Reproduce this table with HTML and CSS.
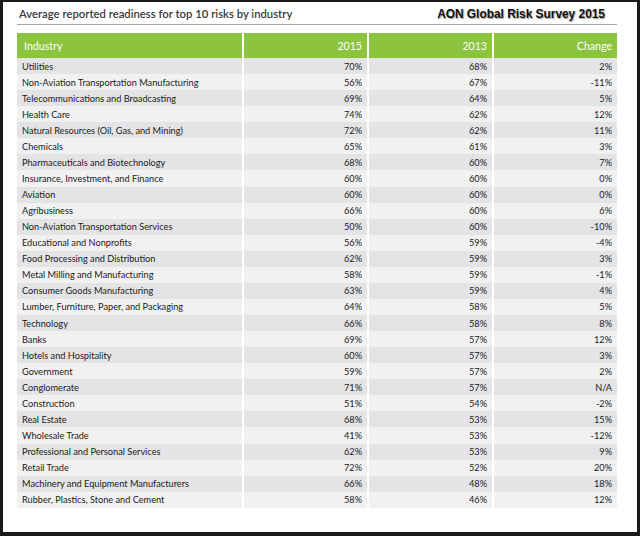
FILE: index.html
```html
<!DOCTYPE html>
<html>
<head>
<meta charset="utf-8">
<link rel="stylesheet" href="styles.css">
</head>
<body>
<div class="frame">
  <div class="titlebar">
    <div class="title">Average reported readiness for top 10 risks by industry</div>
    <div class="brand">AON Global Risk Survey 2015</div>
  </div>
  <table class="grid">
    <colgroup>
      <col class="c-ind"><col class="c-num"><col class="c-num"><col class="c-num">
    </colgroup>
    <thead>
      <tr><th class="ind">Industry</th><th>2015</th><th>2013</th><th>Change</th></tr>
    </thead>
    <tbody>
      <tr><td class="ind">Utilities</td><td>70%</td><td>68%</td><td>2%</td></tr>
      <tr><td class="ind">Non-Aviation Transportation Manufacturing</td><td>56%</td><td>67%</td><td>-11%</td></tr>
      <tr><td class="ind">Telecommunications and Broadcasting</td><td>69%</td><td>64%</td><td>5%</td></tr>
      <tr><td class="ind">Health Care</td><td>74%</td><td>62%</td><td>12%</td></tr>
      <tr><td class="ind">Natural Resources (Oil, Gas, and Mining)</td><td>72%</td><td>62%</td><td>11%</td></tr>
      <tr><td class="ind">Chemicals</td><td>65%</td><td>61%</td><td>3%</td></tr>
      <tr><td class="ind">Pharmaceuticals and Biotechnology</td><td>68%</td><td>60%</td><td>7%</td></tr>
      <tr><td class="ind">Insurance, Investment, and Finance</td><td>60%</td><td>60%</td><td>0%</td></tr>
      <tr><td class="ind">Aviation</td><td>60%</td><td>60%</td><td>0%</td></tr>
      <tr><td class="ind">Agribusiness</td><td>66%</td><td>60%</td><td>6%</td></tr>
      <tr><td class="ind">Non-Aviation Transportation Services</td><td>50%</td><td>60%</td><td>-10%</td></tr>
      <tr><td class="ind">Educational and Nonprofits</td><td>56%</td><td>59%</td><td>-4%</td></tr>
      <tr><td class="ind">Food Processing and Distribution</td><td>62%</td><td>59%</td><td>3%</td></tr>
      <tr><td class="ind">Metal Milling and Manufacturing</td><td>58%</td><td>59%</td><td>-1%</td></tr>
      <tr><td class="ind">Consumer Goods Manufacturing</td><td>63%</td><td>59%</td><td>4%</td></tr>
      <tr><td class="ind">Lumber, Furniture, Paper, and Packaging</td><td>64%</td><td>58%</td><td>5%</td></tr>
      <tr><td class="ind">Technology</td><td>66%</td><td>58%</td><td>8%</td></tr>
      <tr><td class="ind">Banks</td><td>69%</td><td>57%</td><td>12%</td></tr>
      <tr><td class="ind">Hotels and Hospitality</td><td>60%</td><td>57%</td><td>3%</td></tr>
      <tr><td class="ind">Government</td><td>59%</td><td>57%</td><td>2%</td></tr>
      <tr><td class="ind">Conglomerate</td><td>71%</td><td>57%</td><td>N/A</td></tr>
      <tr><td class="ind">Construction</td><td>51%</td><td>54%</td><td>-2%</td></tr>
      <tr><td class="ind">Real Estate</td><td>68%</td><td>53%</td><td>15%</td></tr>
      <tr><td class="ind">Wholesale Trade</td><td>41%</td><td>53%</td><td>-12%</td></tr>
      <tr><td class="ind">Professional and Personal Services</td><td>62%</td><td>53%</td><td>9%</td></tr>
      <tr><td class="ind">Retail Trade</td><td>72%</td><td>52%</td><td>20%</td></tr>
      <tr><td class="ind">Machinery and Equipment Manufacturers</td><td>66%</td><td>48%</td><td>18%</td></tr>
      <tr><td class="ind">Rubber, Plastics, Stone and Cement</td><td>58%</td><td>46%</td><td>12%</td></tr>
    </tbody>
  </table>
</div>
</body>
</html>
```

FILE: styles.css
```css
html, body {
  margin: 0;
  padding: 0;
  background: #ffffff;
}
.frame {
  box-sizing: border-box;
  width: 640px;
  height: 536px;
  border: 3px solid #1a1a1a;
  border-top-width: 2px;
  border-bottom-width: 4px;
  padding: 0 20px 0 14px;
  background: #ffffff;
}
.titlebar {
  display: flex;
  justify-content: space-between;
  align-items: flex-end;
  height: 22px;
  border-bottom: 1px solid #a8a8a8;
  margin-bottom: 8px;
  padding-left: 2px;
}
.title {
  font-family: Lato, "Open Sans", sans-serif;
  font-size: 11.3px;
  font-weight: 600;
  color: #3a3a3a;
  line-height: 16px;
  padding-bottom: 2px;
}
.brand {
  font-family: "Liberation Sans", Arial, sans-serif;
  font-weight: bold;
  font-size: 11.9px;
  color: #111;
  text-shadow: 1px 1px 1px #9a9a9a;
  line-height: 16px;
  padding-bottom: 2px;
  margin-right: 12px;
}
.grid {
  border-collapse: separate;
  border-spacing: 0;
  width: 600px;
  table-layout: fixed;
  font-family: Lato, "Open Sans", sans-serif;
}
.c-ind { width: 225px; }
.c-num { width: 125px; }
.grid th, .grid td {
  border-left: 2px solid #ffffff;
  padding: 0 5px 0 5px;
  text-align: right;
  white-space: nowrap;
  overflow: hidden;
}
.grid th:first-child, .grid td:first-child {
  border-left: none;
}
.grid th {
  background: #8cc43e;
  color: #ffffff;
  font-weight: normal;
  font-size: 10.6px;
  height: 24px;
  padding-top: 1px;
}
.grid td {
  font-size: 9.2px;
  color: #1a1a1a;
  height: 16.07px;
  line-height: 13px;
  padding-top: 0;
  padding-bottom: 0;
}
.grid .ind {
  text-align: left;
  padding-left: 5px;
}
.grid th.ind {
  padding-left: 7px;
}
.grid tbody tr:nth-child(odd) td {
  background: #e4e4e6;
}
.grid tbody tr:nth-child(even) td {
  background: #f1f1f1;
}
```
